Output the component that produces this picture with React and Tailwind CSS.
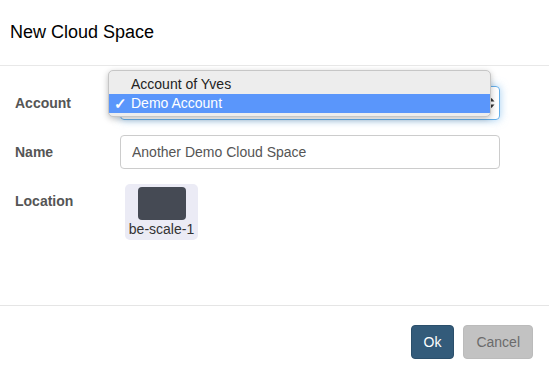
import { useState } from "react";

function UpDown() {
  return (
    <svg width="7" height="12" viewBox="0 0 7 12" className="text-[#333]">
      <path d="M0.5 4.5 L3.5 1 L6.5 4.5 Z" fill="currentColor" />
      <path d="M0.5 7.5 L3.5 11 L6.5 7.5 Z" fill="currentColor" />
    </svg>
  );
}

export default function App() {
  const [account, setAccount] = useState("Demo Account");
  const [name, setName] = useState("Another Demo Cloud Space");
  const accounts = ["Account of Yves", "Demo Account"];

  return (
    <div
      className="w-[549px] h-[376px] bg-white flex flex-col text-[14px] text-[#333]"
      style={{ fontFamily: '"Liberation Sans", Arial, sans-serif' }}
    >
      <div className="h-[66px] border-b border-[#e8e8e8] flex items-center pl-[10px] pb-[2px]">
        <h4 className="text-[18px] text-black leading-[26px]">New Cloud Space</h4>
      </div>

      <div className="flex-1 pt-[20px] pl-[15px] pr-[49px] flex flex-col gap-[15px]">
        <div className="flex">
          <label className="w-[105px] pt-[7px] leading-5 font-bold text-[#555]">Account</label>
          <div className="relative flex-1">
            {/* the open menu covers the selected value */}
            <div className="h-[34px] border border-[#66afe9] rounded-[4px] shadow-[0_0_8px_rgba(102,175,233,0.6)] flex items-center justify-end pr-[4px]">
              <UpDown />
            </div>
            <ul className="absolute left-[-12px] top-[-16px] w-[383px] h-[47px] bg-[#ededed] border border-[#c6c6c6] rounded-[5px] shadow-[0_2px_6px_rgba(0,0,0,0.25)] py-[4px] overflow-hidden">
              {accounts.map((a) => (
                <li
                  key={a}
                  onClick={() => setAccount(a)}
                  className={`h-[19px] leading-[19px] flex items-center cursor-default ${
                    a === account ? "bg-[#5a96fb] text-white" : "text-[#222]"
                  }`}
                >
                  <span className="w-[22px] pl-[5px] text-[15px] font-bold">{a === account ? "✓" : ""}</span>
                  <span>{a}</span>
                </li>
              ))}
            </ul>
          </div>
        </div>

        <div className="flex">
          <label className="w-[105px] pt-[7px] leading-5 font-bold text-[#555]">Name</label>
          <input
            value={name}
            onChange={(e) => setName(e.target.value)}
            className="flex-1 h-[34px] border border-[#ccc] rounded-[4px] pl-[11px] text-[#555] outline-none"
          />
        </div>

        <div className="flex">
          <label className="w-[105px] pt-[7px] leading-5 font-bold text-[#555]">Location</label>
          <div className="ml-[5px] w-[73px] h-[56px] bg-[#ebebf5] rounded-[5px] flex flex-col items-center pt-[3px]">
            <div className="w-[48px] h-[33px] bg-[#454a54] rounded-[4px]" />
            <span className="leading-[18px] text-[#333]">be-scale-1</span>
          </div>
        </div>
      </div>

      <div className="h-[71px] border-t border-[#e5e5e5] flex justify-end items-start pt-[19px] pr-[16px] gap-[9px]">
        <button className="h-[34px] px-[12px] rounded-[4px] bg-[#335b7a] border border-[#2b4f6b] text-white">
          Ok
        </button>
        <button className="h-[34px] px-[12px] rounded-[4px] bg-[#c2c2c2] border border-[#bbb] text-[#6b6b6b]">
          Cancel
        </button>
      </div>
    </div>
  );
}
